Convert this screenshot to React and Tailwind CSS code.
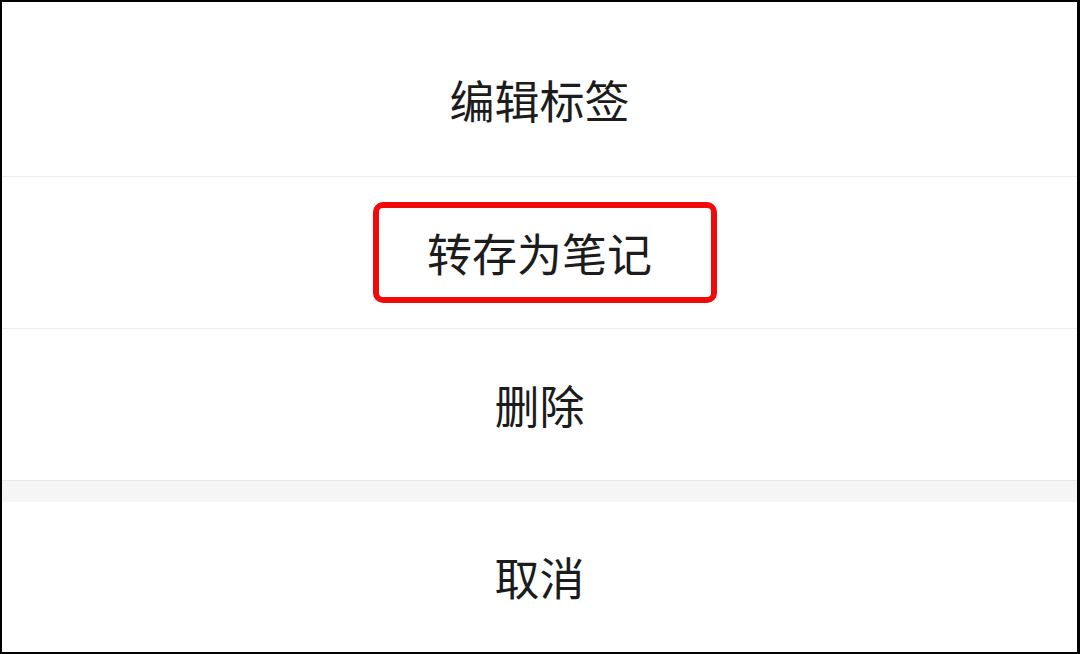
export default function App() {
  const font = { fontFamily: '"Noto Sans CJK SC", "Noto Sans", sans-serif' };
  return (
    <div className="relative w-[1080px] h-[654px] bg-white border-t-2 border-l-2 border-r-[3px] border-b-2 border-black flex flex-col overflow-hidden" style={font}>
      <div className="h-[175px] shrink-0 pt-[22px] border-b border-[#ececec] flex items-center justify-center text-[45px] text-[#1c1c1c]">
        编辑标签
      </div>
      <div className="h-[152px] shrink-0 border-b border-[#ececec] flex items-center justify-center text-[45px] text-[#1c1c1c]">
        转存为笔记
      </div>
      <div className="h-[151px] shrink-0 flex items-center justify-center text-[45px] text-[#1c1c1c]">
        删除
      </div>
      <div className="h-[22px] shrink-0 bg-[#f5f5f5] border-t border-[#e6e6e6]" />
      <div className="flex-1 flex items-center justify-center text-[45px] text-[#1c1c1c]">
        取消
      </div>
      <div className="absolute left-[371px] top-[200px] w-[344px] h-[101px] border-[6px] border-[#f00a0a] rounded-[10px]" />
    </div>
  );
}
